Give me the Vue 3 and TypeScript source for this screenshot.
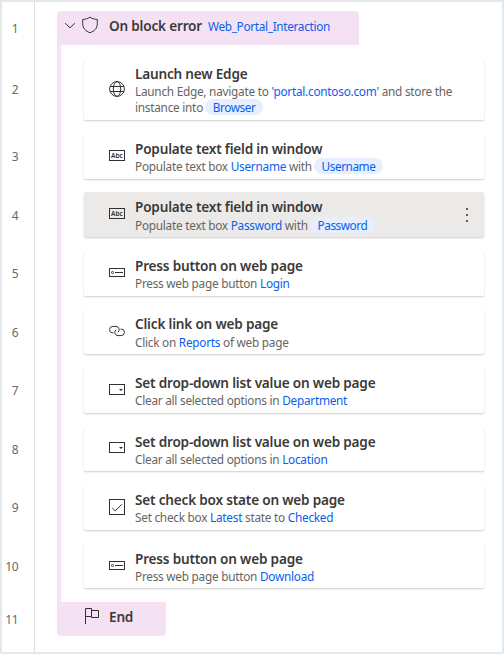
<script setup lang="ts">
type IconName = 'globe' | 'text' | 'button' | 'link' | 'dropdown' | 'check'

interface Part {
  text: string
  kind?: 'link' | 'pill'
}

interface Action {
  line: number
  icon: IconName
  title: string
  desc: Part[][]
  selected?: boolean
}

const actions: Action[] = [
  {
    line: 2,
    icon: 'globe',
    title: 'Launch new Edge',
    desc: [
      [{ text: 'Launch Edge, navigate to ' }, { text: "'portal.contoso.com'", kind: 'link' }, { text: ' and store the' }],
      [{ text: 'instance into ' }, { text: 'Browser', kind: 'pill' }],
    ],
  },
  {
    line: 3,
    icon: 'text',
    title: 'Populate text field in window',
    desc: [[{ text: 'Populate text box ' }, { text: 'Username', kind: 'link' }, { text: ' with ' }, { text: 'Username', kind: 'pill' }]],
  },
  {
    line: 4,
    icon: 'text',
    title: 'Populate text field in window',
    selected: true,
    desc: [[{ text: 'Populate text box ' }, { text: 'Password', kind: 'link' }, { text: ' with ' }, { text: 'Password', kind: 'pill' }]],
  },
  {
    line: 5,
    icon: 'button',
    title: 'Press button on web page',
    desc: [[{ text: 'Press web page button ' }, { text: 'Login', kind: 'link' }]],
  },
  {
    line: 6,
    icon: 'link',
    title: 'Click link on web page',
    desc: [[{ text: 'Click on ' }, { text: 'Reports', kind: 'link' }, { text: ' of web page' }]],
  },
  {
    line: 7,
    icon: 'dropdown',
    title: 'Set drop-down list value on web page',
    desc: [[{ text: 'Clear all selected options in ' }, { text: 'Department', kind: 'link' }]],
  },
  {
    line: 8,
    icon: 'dropdown',
    title: 'Set drop-down list value on web page',
    desc: [[{ text: 'Clear all selected options in ' }, { text: 'Location', kind: 'link' }]],
  },
  {
    line: 9,
    icon: 'check',
    title: 'Set check box state on web page',
    desc: [[{ text: 'Set check box ' }, { text: 'Latest', kind: 'link' }, { text: ' state to ' }, { text: 'Checked', kind: 'link' }]],
  },
  {
    line: 10,
    icon: 'button',
    title: 'Press button on web page',
    desc: [[{ text: 'Press web page button ' }, { text: 'Download', kind: 'link' }]],
  },
]
</script>

<template>
  <main class="flow">
    <div class="row head-row">
      <span class="num">1</span>
      <div class="block-head">
        <svg class="chevron" width="12" height="12" viewBox="0 0 12 12"><path d="M1.2 3.2 6 7.800l4.800-4.600" /></svg>
        <svg class="shield" width="16" height="18" viewBox="0 0 16 18">
          <path d="M8 1.1C6 2.6 3.300 3.300.7 3.500v4.200c0 4.600 3 7.500 7.300 9 4.300-1.500 7.300-4.400 7.300-9V3.500C12.700 3.300 10 2.600 8 1.100Z" />
        </svg>
        <span class="title">On block error</span>
        <span class="desc link block-name">Web_Portal_Interaction</span>
      </div>
    </div>

    <div v-for="a in actions" :key="a.line" class="row">
      <span class="num action-num">{{ a.line }}</span>
      <div class="lane">
        <article class="card" :class="{ selected: a.selected }">
          <svg class="icon" width="16" height="16" viewBox="0 0 16 16">
            <g v-if="a.icon === 'globe'">
              <circle cx="8" cy="8" r="7.400" />
              <ellipse cx="8" cy="8" rx="3.700" ry="7.400" />
              <path d="M1.300 5.500h13.400M1.300 10.500h13.400" />
            </g>
            <g v-else-if="a.icon === 'text'">
              <rect x=".5" y="2.500" width="15" height="10" />
              <text x="8" y="10" text-anchor="middle">Abc</text>
            </g>
            <g v-else-if="a.icon === 'button'">
              <rect x=".5" y="3.500" width="15" height="8" />
              <circle cx="3.500" cy="7.500" r="1" />
              <path d="M6 7.500h8" />
            </g>
            <g v-else-if="a.icon === 'link'">
              <path d="M4.500 9.900H3.800A3.250 3.250 0 0 1 3.800 3.400H7A3.250 3.250 0 0 1 8.800 9.300" />
              <path d="M11.500 6.100h.7a3.250 3.250 0 0 1 0 6.500H9A3.250 3.250 0 0 1 7.200 6.700" />
            </g>
            <g v-else-if="a.icon === 'dropdown'">
              <rect x=".5" y="2.500" width="15" height="10" />
              <path class="solid" d="M10 7h4l-2 2Z" />
            </g>
            <g v-else>
              <rect x=".5" y=".5" width="15" height="15" />
              <path d="m3.200 8.800 3 3 6.600-6.600" />
            </g>
          </svg>
          <div class="text">
            <h3 class="title">{{ a.title }}</h3>
            <p v-for="(l, i) in a.desc" :key="i" class="desc"><span v-for="(p, j) in l" :key="j" :class="p.kind">{{ p.text }}</span></p>
          </div>
          <svg v-if="a.selected" class="more" width="4" height="16" viewBox="0 0 4 16">
            <path d="M1 1h2v2H1zM1 7h2v2H1zM1 13h2v2H1z" />
          </svg>
        </article>
      </div>
    </div>

    <div class="row end-row">
      <span class="num">11</span>
      <div class="block-end">
        <svg class="flag" width="14" height="17" viewBox="0 0 14 17">
          <path d="M.5 16V.5h6v8h-6M6.500 2.500h7v7h-7v-1" />
        </svg>
        <span class="title">End</span>
      </div>
    </div>
  </main>
</template>

<style>
body {
  background: #fff;
}
</style>

<style scoped>
.flow {
  box-sizing: border-box;
  height: 654px;
  padding-top: 9px;
  border: 2px solid #e5e8eb;
  background: linear-gradient(90deg, transparent 32px, #dcdee0 32px, #dcdee0 33px, transparent 33px) #fff;
  font-family: 'Noto Sans', 'Open Sans', sans-serif;
  color: #3b3a39;
  overflow: hidden;
}
.row {
  display: grid;
  grid-template-columns: 16px 1fr;
  column-gap: 39px;
}
.num {
  align-self: center;
  text-align: right;
  font-size: 12px;
  line-height: 16px;
  letter-spacing: -0.5px;
  color: #6b6968;
}
.head-row .num,
.end-row .num {
  padding-top: 2px;
}
.action-num {
  padding-bottom: 11.500px;
}
.row:nth-child(2) .action-num {
  padding: 14px 0 12px;
}
.block-head {
  box-sizing: border-box;
  display: flex;
  align-items: center;
  width: 302px;
  height: 34px;
  padding: 0 7px 4px;
  border-radius: 4px 4px 0 0;
  background: #f5e1f4;
}
svg {
  flex: none;
  fill: none;
  stroke: #323130;
  stroke-width: 1;
}
.chevron {
  margin-bottom: 1px;
}
.shield {
  margin: 0 11px 2px 6px;
}
.title {
  margin: 0 0 -0.600px;
  font-size: 13.6px;
  line-height: 20px;
  font-weight: 600;
  letter-spacing: -0.2px;
  white-space: pre;
}
.desc {
  margin: 0;
  font-size: 11.8px;
  line-height: 16px;
  letter-spacing: -0.25px;
  color: #666462;
  white-space: pre;
}
.link,
.pill {
  color: #0a5eee;
}
.desc.block-name {
  margin-left: 6px;
  letter-spacing: -0.32px;
}
.pill {
  display: inline-block;
  margin-left: -1px;
  padding: 0 8px;
  border-radius: 8px;
  background: #e5effd;
  letter-spacing: -0.45px;
}
.lane {
  border-left: 4px solid #f5e1f4;
  padding: 0 0 13.550px 23px;
}
.row:nth-child(2) .lane {
  padding: 13.800px 0 13.750px 23px;
}
.card {
  display: flex;
  align-items: center;
  box-sizing: border-box;
  width: 400px;
  padding: 5.250px 15px 4.350px 25px;
  border-radius: 2px;
  background: #fff;
  box-shadow: 0 1px 2px rgba(0, 0, 0, 0.2);
}
.selected {
  background: #ebeae9;
}
.icon {
  margin: 0 10px 1.500px 0;
}
.icon text {
  font-size: 6.600px;
  font-weight: 600;
  fill: #323130;
  stroke: none;
}
.icon .solid {
  fill: #323130;
  stroke: none;
}
.text {
  flex: 1;
}
.more {
  margin-bottom: 1px;
}
.more path {
  fill: #605e5c;
  stroke: none;
}
.block-end {
  box-sizing: border-box;
  display: flex;
  align-items: center;
  width: 109px;
  height: 34px;
  padding: 0 0 4px 28px;
  border-radius: 0 2px 4px 4px;
  background: #f5e1f4;
}
.flag {
  margin: 0 10px 1px 0;
}
</style>
